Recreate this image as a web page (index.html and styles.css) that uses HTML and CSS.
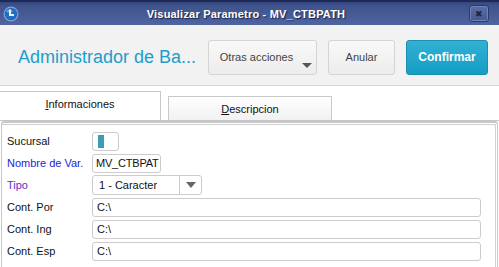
FILE: index.html
```html
<!DOCTYPE html>
<html lang="es">
<head>
    <meta charset="UTF-8">
    <title>Visualizar Parametro - MV_CTBPATH</title>
    <link rel="stylesheet" href="styles.css">
</head>
<body>
    <div class="window">
        <div class="titlebar">
            <div class="app-icon">
                <svg width="16" height="16" viewBox="0 0 16 16">
                    <circle cx="8" cy="8" r="7.5" fill="#8aa0c8"/>
                    <circle cx="8" cy="8" r="6.3" fill="#1e6fc0"/>
                    <path d="M6 3.5 V10 H11 V8 H8 V3.5 Z" fill="#e8f0fa"/>
                    <ellipse cx="6.5" cy="5" rx="3" ry="1.6" fill="#ffffff" opacity="0.35"/>
                </svg>
            </div>
            <div class="title">Visualizar Parametro - MV_CTBPATH</div>
            <div class="close">&#x2716;</div>
        </div>

        <div class="header">
            <div class="app-name">Administrador de Ba...</div>
            <div class="actions">
                <button class="btn btn-more">Otras acciones<span class="caret"></span></button>
                <button class="btn">Anular</button>
                <button class="btn btn-primary">Confirmar</button>
            </div>
        </div>

        <div class="tabs">
            <div class="tab active"><u>I</u>nformaciones</div>
            <div class="tab"><u>D</u>escripcion</div>
        </div>

        <div class="panel">
            <div class="row">
                <label>Sucursal</label>
                <div class="field small"><span class="mark"></span></div>
            </div>
            <div class="row">
                <label class="blue">Nombre de Var.</label>
                <div class="field var">MV_CTBPAT</div>
            </div>
            <div class="row">
                <label class="purple">Tipo</label>
                <div class="field select">
                    <span class="value">1 - Caracter</span>
                    <span class="arrow"></span>
                </div>
            </div>
            <div class="row">
                <label>Cont. Por</label>
                <div class="field wide">C:\</div>
            </div>
            <div class="row">
                <label>Cont. Ing</label>
                <div class="field wide">C:\</div>
            </div>
            <div class="row">
                <label>Cont. Esp</label>
                <div class="field wide">C:\</div>
            </div>
        </div>
    </div>
</body>
</html>
```

FILE: styles.css
```css
* {
    margin: 0;
    padding: 0;
    box-sizing: border-box;
    font-family: "Liberation Sans", Arial, sans-serif;
}

body {
    background-color: #ffffff;
    width: 499px;
    height: 267px;
    overflow: hidden;
}

.window {
    display: flex;
    flex-direction: column;
    height: 267px;
}

/* title bar */
.titlebar {
    height: 25px;
    display: flex;
    align-items: center;
    padding: 0 10px 0 3px;
    background: linear-gradient(to bottom, #34467f 0, #3f538d 4px, #5064a0 100%);
    border-top: 2px solid #1e2a55;
}

.app-icon {
    width: 16px;
    height: 16px;
    display: flex;
}

.title {
    flex: 1;
    text-align: center;
    color: #ffffff;
    font-size: 11px;
    font-weight: bold;
    letter-spacing: 0.2px;
    text-shadow: 1px 1px 1px #1a2244;
    padding-left: 4px;
}

.close {
    width: 20px;
    height: 17px;
    border: 1px solid #2c3a68;
    border-radius: 3px;
    background: linear-gradient(to bottom, #5a6ea6, #46598f);
    color: #1c2440;
    font-size: 9px;
    display: flex;
    align-items: center;
    justify-content: center;
    box-shadow: inset 0 0 0 1px #7083b6;
}

/* header */
.header {
    height: 61px;
    display: flex;
    align-items: center;
    justify-content: space-between;
    padding: 0 11px 0 18px;
    background-color: #f2f2f2;
    border-bottom: 1px solid #d9d9d9;
}

.app-name {
    color: #1c9ecb;
    font-size: 18px;
    padding-top: 4px;
}

.actions {
    display: flex;
    gap: 11px;
    padding-top: 4px;
}

.btn {
    height: 35px;
    width: 67px;
    border: 1px solid #d4d4d4;
    border-radius: 3px;
    background: linear-gradient(to bottom, #f9f9f9, #ececec);
    color: #444444;
    font-size: 11px;
    position: relative;
}

.btn-more {
    width: 109px;
    padding: 0 12px 0 0;
}

.caret {
    position: absolute;
    right: 4px;
    bottom: 6px;
    border-left: 5px solid transparent;
    border-right: 5px solid transparent;
    border-top: 5px solid #555555;
}

.btn-primary {
    width: 82px;
    border-color: #1a8fb3;
    background: linear-gradient(to bottom, #33b0d2, #149ec4);
    color: #ffffff;
    font-size: 12px;
    font-weight: bold;
}

/* tabs */
.tabs {
    height: 35px;
    display: flex;
    align-items: flex-end;
    gap: 7px;
    border-bottom: 1px solid #c6c6c6;
}

.tab {
    height: 24px;
    width: 164px;
    display: flex;
    align-items: center;
    justify-content: center;
    font-size: 11px;
    color: #111111;
    border: 1px solid #c8c8c8;
    border-bottom: none;
    background: linear-gradient(to bottom, #ffffff, #f1f1f1);
}

.tab u {
    text-decoration: underline;
}

.tab.active {
    width: 161px;
    height: 29px;
    background: #ffffff;
    border-left: none;
    padding-bottom: 4px;
}

/* panel */
.panel {
    flex: 1;
    margin: 0 1px 0 1px;
    padding: 8px 16px 0 5px;
    border: 1px solid #c8c8c8;
    border-top-width: 2px;
    border-bottom: none;
    box-shadow: inset -1px 1px 0 #ffffff, inset -2px 2px 0 #d0d0d0;
    border-radius: 3px 3px 0 0;
    display: flex;
    flex-direction: column;
    gap: 2px;
}

.row {
    display: flex;
    align-items: center;
    height: 20px;
}

.row label {
    width: 85px;
    font-size: 11px;
    color: #111111;
}

.row label.blue {
    color: #2424d6;
}

.row label.purple {
    color: #5b2fc9;
}

.field {
    height: 19px;
    border: 1px solid #cccccc;
    border-radius: 3px;
    font-size: 11px;
    color: #111111;
    display: flex;
    align-items: center;
    padding-left: 4px;
    background: #ffffff;
}

.field.small {
    width: 27px;
    padding-left: 5px;
}

.mark {
    width: 6px;
    height: 13px;
    background-color: #3a9db4;
}

.field.var {
    width: 69px;
    padding-left: 3px;
    letter-spacing: -0.2px;
    white-space: nowrap;
    overflow: hidden;
}

.field.select {
    width: 110px;
    height: 20px;
    padding-left: 6px;
    justify-content: space-between;
}

.field.select .value {
    flex: 1;
}

.field.select .arrow {
    width: 22px;
    height: 100%;
    border-left: 1px solid #cccccc;
    position: relative;
}

.field.select .arrow::after {
    content: "";
    position: absolute;
    left: 6px;
    top: 6px;
    border-left: 5px solid transparent;
    border-right: 5px solid transparent;
    border-top: 6px solid #666666;
}

.field.wide {
    flex: 1;
}
```
